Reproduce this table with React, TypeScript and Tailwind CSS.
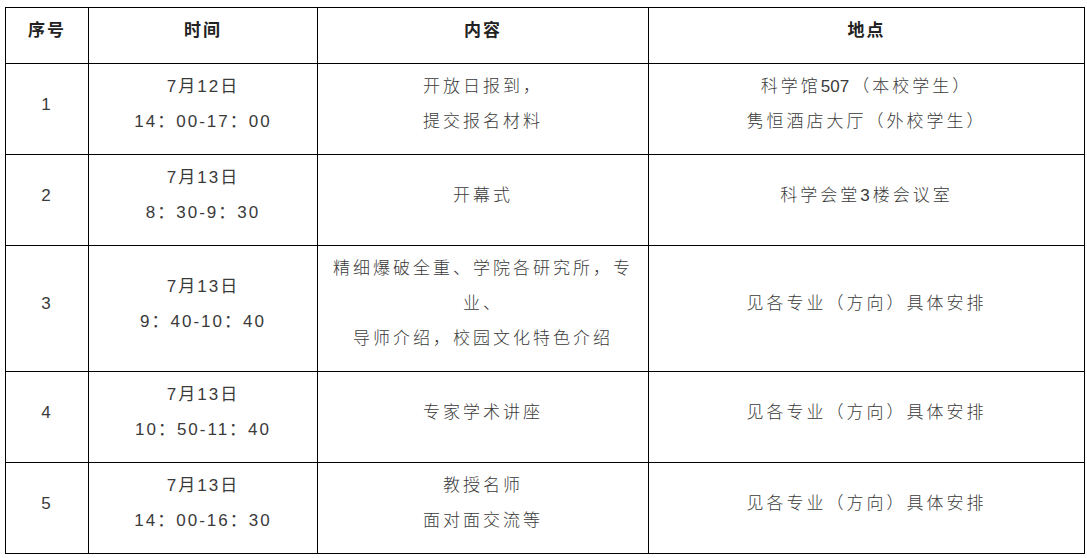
const font = { fontFamily: '"Liberation Sans", "Noto Sans CJK SC", sans-serif' };

type Row = {
  no: string;
  time: string[];
  content: string[];
  place: string[];
  h: string;
};

const rows: Row[] = [
  {
    no: '1',
    time: ['7月12日', '14：00-17：00'],
    content: ['开放日报到，', '提交报名材料'],
    place: ['科学馆507（本校学生）', '隽恒酒店大厅（外校学生）'],
    h: 'h-[91px]',
  },
  {
    no: '2',
    time: ['7月13日', '8：30-9：30'],
    content: ['开幕式'],
    place: ['科学会堂3楼会议室'],
    h: 'h-[91px]',
  },
  {
    no: '3',
    time: ['7月13日', '9：40-10：40'],
    content: ['精细爆破全重、学院各研究所，专', '业、', '导师介绍，校园文化特色介绍'],
    place: ['见各专业（方向）具体安排'],
    h: 'h-[126px]',
  },
  {
    no: '4',
    time: ['7月13日', '10：50-11：40'],
    content: ['专家学术讲座'],
    place: ['见各专业（方向）具体安排'],
    h: 'h-[91px]',
  },
  {
    no: '5',
    time: ['7月13日', '14：00-16：30'],
    content: ['教授名师', '面对面交流等'],
    place: ['见各专业（方向）具体安排'],
    h: 'h-[91px]',
  },
];

// digit runs inside CJK text keep normal spacing, as in the source
function Lines({ lines }: { lines: string[] }) {
  return (
    <>
      {lines.map((l, i) => (
        <div key={i} className="whitespace-nowrap">
          {l.split(/(\d+)/).map((part, j) =>
            /^\d+$/.test(part) ? (
              <span key={j} className="tracking-normal font-normal mr-[3px]">
                {part}
              </span>
            ) : (
              part
            ),
          )}
        </div>
      ))}
    </>
  );
}

const cell = 'border border-black text-center align-middle pt-[4px] pb-[14px] px-2';

export default function App() {
  return (
    <div className="w-[1087px] h-[558px] bg-white pt-[7px] pl-[5px]" style={font}>
      <table className="border-collapse w-[1079px] table-fixed text-[17px] leading-[35px] tracking-[2px] text-[#3a3a3a]">
        <colgroup>
          <col className="w-[83px]" />
          <col className="w-[229px]" />
          <col className="w-[331px]" />
          <col className="w-[436px]" />
        </colgroup>
        <thead>
          <tr className="h-[56px] font-bold text-[#222]">
            <th className={cell}>序号</th>
            <th className={cell}>时间</th>
            <th className={cell}>内容</th>
            <th className={cell}>地点</th>
          </tr>
        </thead>
        <tbody>
          {rows.map((r) => (
            <tr key={r.no} className={r.h}>
              <td className={cell}>{r.no}</td>
              <td className={cell}>
                {r.time.map((t, i) => (
                  <div key={i} className="whitespace-nowrap">
                    {t}
                  </div>
                ))}
              </td>
              <td className={`${cell} font-light tracking-[3px]`}>
                <Lines lines={r.content} />
              </td>
              <td className={`${cell} font-light tracking-[3px]`}>
                <Lines lines={r.place} />
              </td>
            </tr>
          ))}
        </tbody>
      </table>
    </div>
  );
}
